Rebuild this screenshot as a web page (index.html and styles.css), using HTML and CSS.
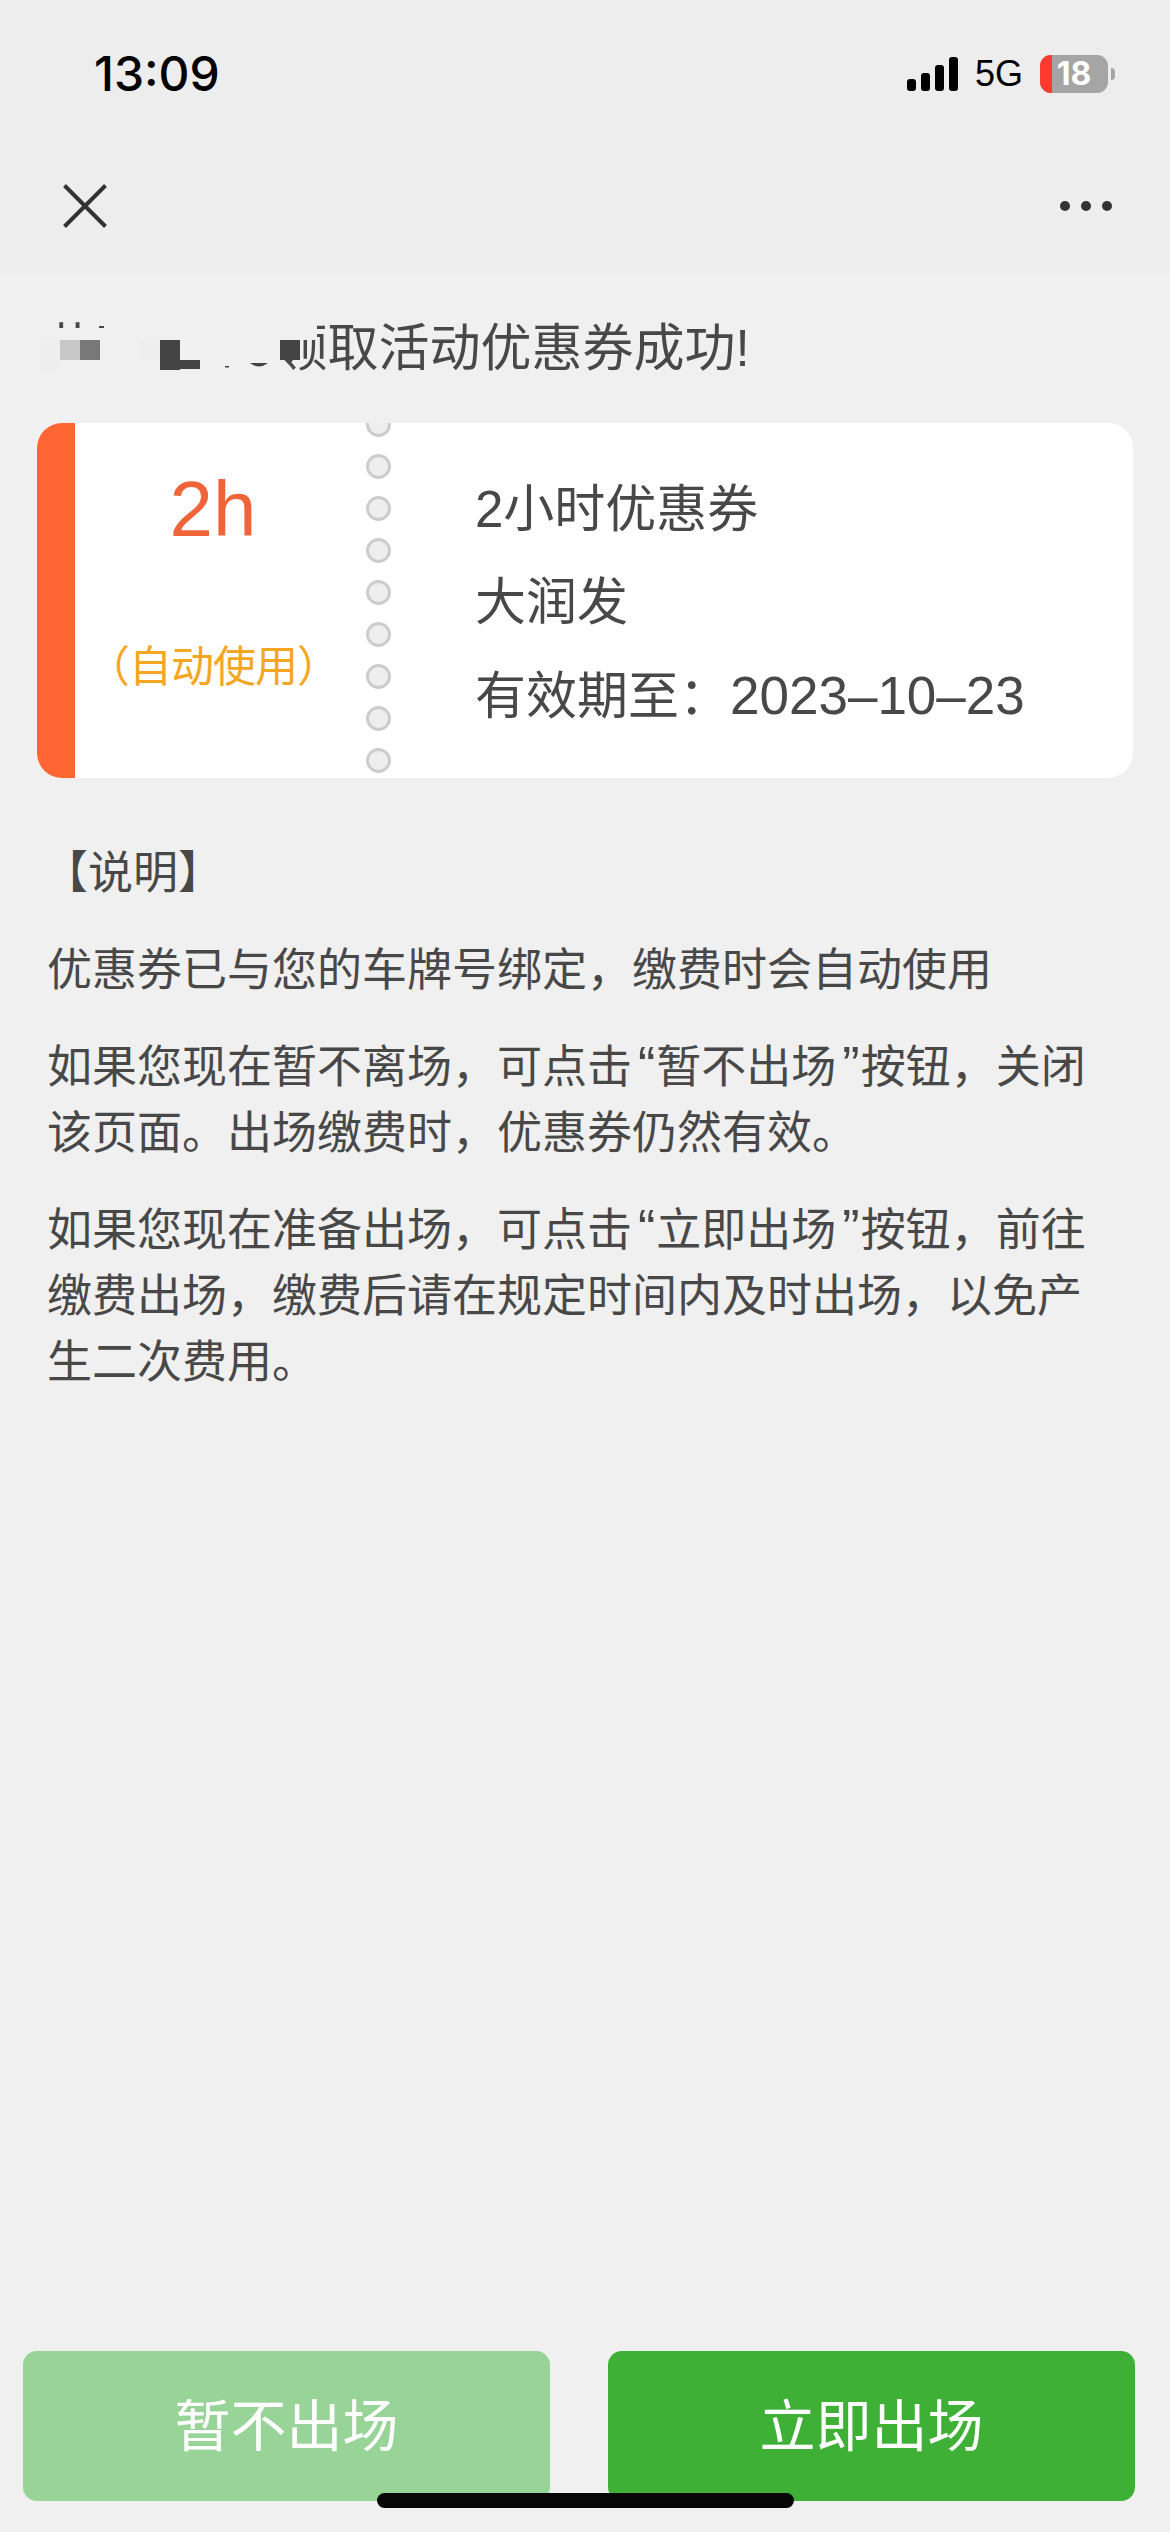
FILE: index.html
```html
<!DOCTYPE html>
<html lang="zh-CN">
<head>
<meta charset="utf-8">
<title>领取活动优惠券成功</title>
<link rel="stylesheet" href="styles.css">
</head>
<body>
<div class="page">
  <header class="top">
    <div class="status">
      <span class="time">13:09</span>
      <div class="status-right">
        <div class="signal"><i class="s1"></i><i class="s2"></i><i class="s3"></i><i class="s4"></i></div>
        <span class="net">5G</span>
        <div class="battery"><div class="battery-body"><span class="battery-red"></span><span class="battery-num">18</span></div><span class="battery-nub"></span></div>
      </div>
    </div>
    <nav class="nav">
      <svg class="close" width="44" height="44" viewBox="0 0 44 44"><path d="M1.5 1.5L42.5 42.5M42.5 1.5L1.5 42.5" stroke="#333" stroke-width="4" fill="none"/></svg>
      <div class="dots"><i></i><i></i><i></i></div>
    </nav>
  </header>
  <main class="main">
    <div class="title">
      <span class="title-text">恭喜您****领取活动优惠券成功!</span>
      <svg class="mosaic" width="300" height="60" viewBox="0 0 300 60">
        <rect x="84" y="0" width="213" height="20" fill="#f0f0f0"/>
        <rect x="0" y="8" width="84" height="13" fill="#f0f0f0"/>
        <rect x="0" y="20" width="260" height="36" fill="#f0f0f0"/>
        <rect x="20" y="20" width="20" height="30" fill="#eee"/>
        <rect x="40" y="20" width="20" height="20" fill="#c8c8c8"/>
        <rect x="60" y="20" width="20" height="20" fill="#787878"/>
        <rect x="120" y="20" width="20" height="20" fill="#eee"/>
        <rect x="140" y="20" width="20" height="30" fill="#444"/>
        <rect x="160" y="40" width="20" height="9" fill="#444"/>
        <rect x="260" y="20" width="20" height="20" fill="#444"/>
        <rect x="205" y="46" width="4" height="1.5" fill="#444"/>
        <path d="M230 43H248Q239 50 230 43Z" fill="#444"/>
      </svg>
    </div>
    <section class="card">
      <div class="card-bar"></div>
      <div class="card-left">
        <div class="amount">2h</div>
        <div class="auto">（自动使用）</div>
      </div>
      <div class="perf"><i></i><i></i><i></i><i></i><i></i><i></i><i></i><i></i><i></i></div>
      <div class="card-right">
        <div>2小时优惠券</div>
        <div>大润发</div>
        <div>有效期至：<span class="date">2023–10–23</span></div>
      </div>
    </section>
    <section class="desc">
      <p class="desc-head">【说明】</p>
      <p>优惠券已与您的车牌号绑定，缴费时会自动使用</p>
      <p>如果您现在暂不离场，可点击<span class="q">“</span>暂不出场<span class="q">”</span>按钮，关闭<br>该页面。出场缴费时，优惠券仍然有效。</p>
      <p>如果您现在准备出场，可点击<span class="q">“</span>立即出场<span class="q">”</span>按钮，前往<br>缴费出场，缴费后请在规定时间内及时出场，以免产<br>生二次费用。</p>
    </section>
  </main>
  <footer class="actions">
    <button class="btn btn-light">暂不出场</button>
    <button class="btn btn-green">立即出场</button>
  </footer>
  <div class="home-bar"></div>
</div>
</body>
</html>
```
FILE: styles.css
```css
* { box-sizing: border-box; }
html, body { margin: 0; padding: 0; }
body {
  background: #f0f0f0;
  font-family: "Liberation Sans", "Noto Sans CJK SC", sans-serif;
  color: #484848;
}
.page {
  position: relative;
  width: 1170px;
  height: 2532px;
  overflow: hidden;
  display: flex;
  flex-direction: column;
}
.top { background: #ededed; height: 273px; flex: none; }
.status {
  height: 148px;
  padding: 48px 55px 0 94px;
  display: flex;
  justify-content: space-between;
  align-items: flex-start;
}
.time {
  font-family: Inter, sans-serif;
  font-weight: 500;
  font-size: 48px;
  line-height: 52px;
  color: #000;
}
.status-right { display: flex; align-items: center; height: 52px; }
.signal { display: flex; align-items: flex-end; gap: 5px; height: 34px; }
.signal i { width: 9px; background: #000; border-radius: 3px; display: block; }
.s1 { height: 12px; }
.s2 { height: 18px; }
.s3 { height: 26px; }
.s4 { height: 34px; }
.net {
  margin-left: 17px;
  font-family: "Liberation Sans", sans-serif;
  font-size: 36px;
  line-height: 52px;
  color: #000;
}
.battery { margin-left: 17px; display: flex; align-items: center; gap: 3px; }
.battery-body {
  position: relative;
  width: 68px;
  height: 38px;
  border-radius: 11px;
  background: #a5a5a5;
  overflow: hidden;
  display: flex;
  align-items: center;
  justify-content: center;
}
.battery-red { position: absolute; left: 0; top: 0; bottom: 0; width: 12px; background: #ff3b30; }
.battery-num {
  position: relative;
  font-family: Inter, sans-serif;
  font-weight: 700;
  font-size: 32px;
  line-height: 38px;
  color: #fff;
}
.battery-nub { width: 4px; height: 12px; background: #a5a5a5; border-radius: 0 6px 6px 0; }
.nav {
  display: flex;
  justify-content: space-between;
  align-items: center;
  padding: 0 58px 0 63px;
  height: 118px;
}
.close { display: block; margin-top: -2px; }
.dots { display: flex; gap: 11px; margin-top: -2px; }
.dots i { width: 10px; height: 10px; background: #333; border-radius: 50%; display: block; }

.main { flex: 1; min-height: 0; }
.title {
  position: relative;
  margin-top: 42px;
  padding-left: 44px;
  height: 108px;
  font-size: 51px;
  line-height: 68px;
  white-space: nowrap;
}
.mosaic { position: absolute; left: 20px; top: 5px; }
.card {
  display: flex;
  height: 355px;
  margin: 0 37px;
  background: #fff;
  border-radius: 25px;
  overflow: hidden;
}
.card-bar { width: 38px; background: #ff6633; flex: none; }
.card-left {
  width: 276px;
  flex: none;
  display: flex;
  flex-direction: column;
  align-items: center;
  padding-top: 46px;
}
.amount {
  font-size: 78px;
  line-height: 80px;
  color: #f0643a;
}
.auto {
  margin-top: 89px;
  font-size: 43px;
  line-height: 58px;
  color: #f5a623;
  letter-spacing: -1px;
  white-space: nowrap;
}
.perf {
  flex: none;
  width: 25px;
  margin-top: -11px;
  margin-left: 15px;
  display: flex;
  flex-direction: column;
  gap: 17px;
}
.perf i {
  display: block;
  width: 25px;
  height: 25px;
  border-radius: 50%;
  background: #eee;
  border: 3px solid #ccc;
}
.card-right {
  margin-left: 84px;
  padding-top: 40px;
  font-size: 51px;
  line-height: 93px;
  white-space: nowrap;
}
.date { font-size: 53px; }
.desc { padding: 63px 40px 0 47px; font-size: 45px; line-height: 66px; }
.desc p { margin: 0 0 31px; }
.desc .q { font-size: 52px; line-height: 0; padding: 0 1px 0 6px; }
.desc-head { margin-left: -4px !important; }
.actions {
  flex: none;
  display: flex;
  justify-content: space-between;
  padding: 0 35px 31px 23px;
}
.btn {
  width: 527px;
  height: 150px;
  border: 0;
  border-radius: 14px;
  color: #fff;
  font-family: "Liberation Sans", "Noto Sans CJK SC", sans-serif;
  font-size: 56px;
  padding: 0 0 10px;
}
.btn-light { background: #98d498; }
.btn-green { background: #3eb035; }
.home-bar {
  position: absolute;
  left: 377px;
  top: 2493px;
  width: 417px;
  height: 15px;
  border-radius: 8px;
  background: #060606;
}
```
